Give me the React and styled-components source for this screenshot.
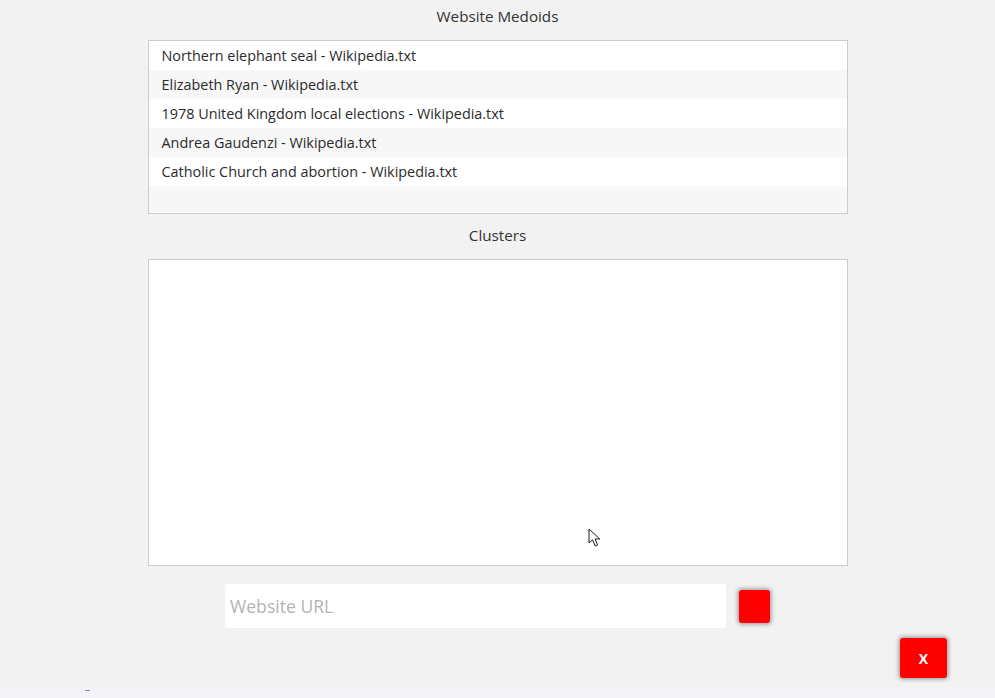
import React from "react";
import styled, { createGlobalStyle } from "styled-components";

const Global = createGlobalStyle`
  html, body {
    margin: 0;
    padding: 0;
    background: #f2f2f2;
    font-family: "Open Sans", "Noto Sans", sans-serif;
    color: #333;
  }
`;

const Page = styled.div`
  width: 995px;
  height: 698px;
  display: flex;
  flex-direction: column;
  overflow: hidden;
`;

const Main = styled.div`
  flex: 1;
  display: flex;
  flex-direction: column;
  align-items: center;
  position: relative;
`;

const Heading = styled.div`
  font-size: 15.2px;
  color: #333;
  height: 40px;
  line-height: 33px;
  text-align: center;
`;

const ListBox = styled.div`
  width: 698px;
  height: 172px;
  border: 1px solid #cccccc;
  background: #f7f7f7;
`;

const Row = styled.div`
  height: 29px;
  line-height: 29px;
  padding-left: 13px;
  font-size: 14.4px;
  color: #2b2b2b;
  background: ${(p) => (p.$odd ? "#f7f7f7" : "#ffffff")};
  white-space: nowrap;
`;

const ClusterHeading = styled(Heading)`
  height: 45px;
  line-height: 43px;
`;

const ClusterBox = styled.div`
  width: 698px;
  height: 305px;
  border: 1px solid #cccccc;
  background: #ffffff;
  position: relative;
`;

const Cursor = styled.svg`
  position: absolute;
  left: 439px;
  top: 268px;
`;

const Form = styled.div`
  display: flex;
  align-items: center;
  gap: 13px;
  margin-top: 18px;
`;

const UrlInput = styled.input`
  width: 501px;
  height: 44px;
  box-sizing: border-box;
  border: none;
  border-radius: 3px;
  background: #ffffff;
  padding: 0 5px;
  font-family: "Open Sans", "Noto Sans", sans-serif;
  font-size: 17.6px;
  outline: none;

  &::placeholder {
    color: #b3b3b3;
  }
`;

const RedButton = styled.button`
  width: 31px;
  height: 33px;
  border: none;
  border-radius: 3px;
  background: #ff0000;
  box-shadow: 0 0 4px 1px rgba(60, 60, 80, 0.55);
  padding: 0;
  cursor: pointer;
`;

const CloseRow = styled.div`
  align-self: stretch;
  display: flex;
  justify-content: flex-end;
  padding-right: 48px;
  margin-top: 10px;
`;

const CloseButton = styled(RedButton)`
  width: 47px;
  height: 40px;
  color: #ffffff;
  font-family: "Open Sans", sans-serif;
  font-weight: 700;
  font-size: 14px;
`;

const Strip = styled.div`
  height: 10px;
  background: #f3f3f8;
  position: relative;
`;

const Mark = styled.div`
  position: absolute;
  left: 85px;
  top: 2px;
  width: 5px;
  height: 1px;
  background: #7a8fbf;
`;

const medoids = [
  "Northern elephant seal - Wikipedia.txt",
  "Elizabeth Ryan - Wikipedia.txt",
  "1978 United Kingdom local elections - Wikipedia.txt",
  "Andrea Gaudenzi - Wikipedia.txt",
  "Catholic Church and abortion - Wikipedia.txt",
];

export default function App() {
  return (
    <Page>
      <Global />
      <Main>
        <Heading>Website Medoids</Heading>
        <ListBox>
          {medoids.map((m, i) => (
            <Row key={i} $odd={i % 2 === 1}>
              {m}
            </Row>
          ))}
        </ListBox>
        <ClusterHeading>Clusters</ClusterHeading>
        <ClusterBox>
          <Cursor width="14" height="20" viewBox="0 0 14 20">
            <path
              d="M1 1 L1 15 L4.5 11.8 L7.2 18 L9.6 17 L7 11 L11.8 11 Z"
              fill="#ffffff"
              stroke="#1a1a2a"
              strokeWidth="1"
              strokeLinejoin="round"
            />
          </Cursor>
        </ClusterBox>
        <Form>
          <UrlInput placeholder="Website URL" />
          <RedButton />
        </Form>
        <CloseRow>
          <CloseButton>X</CloseButton>
        </CloseRow>
      </Main>
      <Strip>
        <Mark />
      </Strip>
    </Page>
  );
}
